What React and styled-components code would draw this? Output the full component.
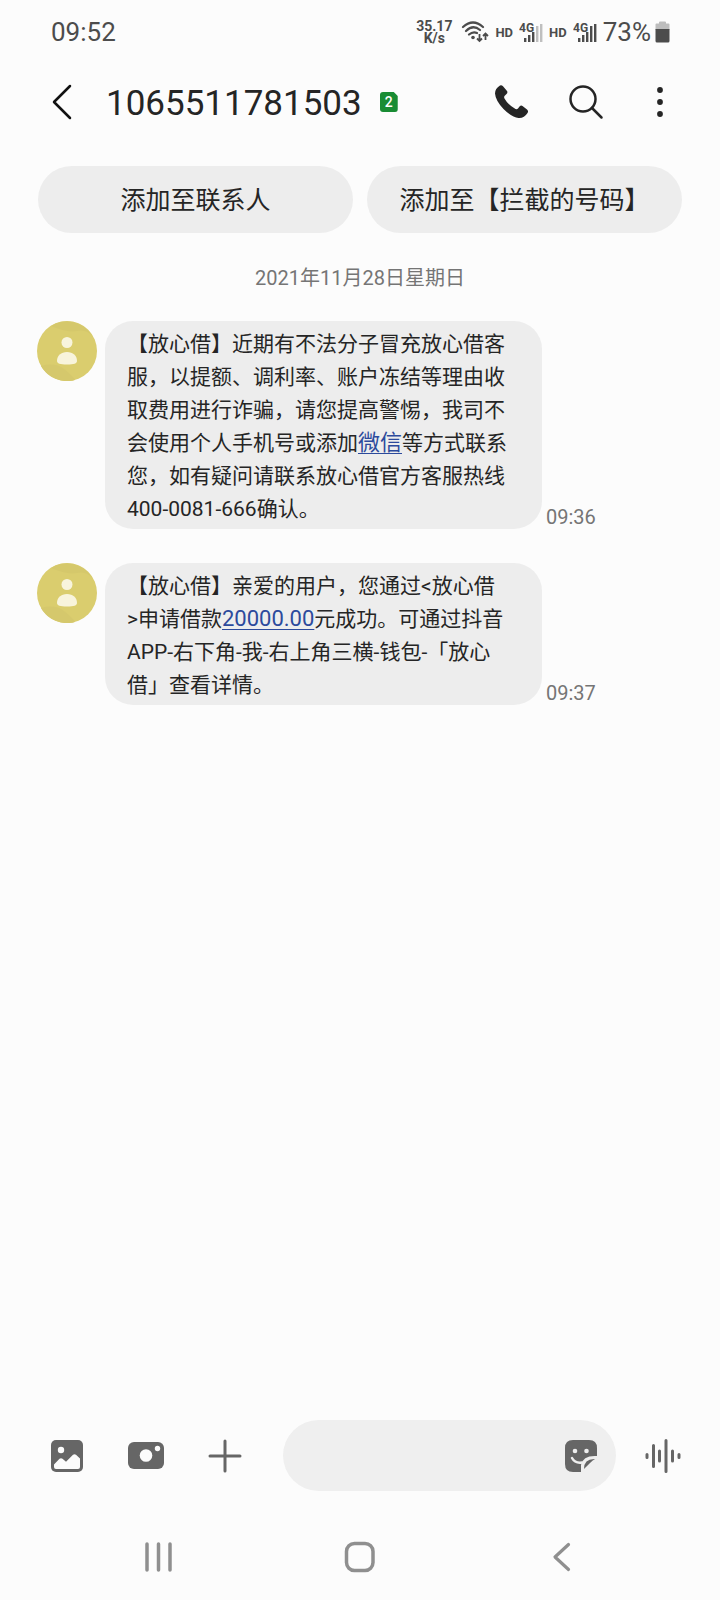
import React from 'react'
import styled, { createGlobalStyle } from 'styled-components'

const GlobalStyle = createGlobalStyle`
  * {
    box-sizing: border-box;
  }
  body {
    margin: 0;
    background-color: #fcfcfc;
    font-family: Roboto, 'Noto Sans CJK SC', sans-serif;
    color: #252525;
  }
  button {
    border: 0;
    padding: 0;
    background: none;
    font: inherit;
    color: inherit;
    cursor: pointer;
  }
  svg {
    display: block;
  }
`

const Screen = styled.div`
  display: flex;
  flex-direction: column;
  min-height: 100vh;
`

const StatusBar = styled.div`
  display: flex;
  align-items: center;
  justify-content: space-between;
  height: 64px;
  padding: 0 50px 0 51px;
  font-size: 26px;
  color: #4c4c4c;
`

const StatusGroup = styled.div`
  display: flex;
  align-items: center;
  gap: 6px;
`

const Speed = styled.div`
  margin-right: 3px;
  font-size: 14px;
  line-height: 12px;
  font-weight: 700;
  text-align: center;
`

const Hd = styled.span`
  font-size: 13px;
  font-weight: 700;
`

const Percent = styled.span`
  display: flex;
  align-items: center;
  gap: 4px;
`

const Header = styled.header`
  display: flex;
  align-items: center;
  height: 76px;
  padding: 0 41px 0 46px;
`

const Title = styled.h1`
  margin: 0 18px 0 28px;
  padding-top: 3px;
  font-size: 35px;
  font-weight: 400;
  line-height: 44px;
`

const SimBadge = styled.span`
  width: 18px;
  height: 20px;
  border-radius: 3px;
  background-color: #198c34;
  clip-path: polygon(0 0, 78% 0, 100% 20%, 100% 100%, 0 100%);
  color: #fff;
  font-size: 14px;
  font-weight: 500;
  line-height: 20px;
  text-align: center;
`

const HeaderActions = styled.div`
  display: flex;
  gap: 36px;
  margin-left: auto;
`

const IconButton = styled.button`
  display: flex;
  align-items: center;
  justify-content: center;
  width: ${props => props.$size || 38}px;
  height: 48px;
  flex-shrink: 0;
`

const QuickActions = styled.div`
  display: flex;
  gap: 14px;
  padding: 26px 38px 0;
`

const Pill = styled.button`
  flex: 1;
  height: 67px;
  border-radius: 34px;
  && {
    padding-bottom: 3px;
    background-color: #ededed;
    font-size: 25px;
  }
`

const Thread = styled.main`
  flex: 1;
  padding: 0 37px;
`

const DateLine = styled.div`
  margin: 33px 0 31px;
  text-align: center;
  font-size: 20px;
  line-height: 24px;
  color: #757575;
`

const Message = styled.article`
  display: flex;
  margin-bottom: 34px;
`

const Bubble = styled.p`
  flex: 0 1 437px;
  margin: 0 4px 0 8px;
  padding: 7px 30px 3px 22px;
  border-radius: 28px;
  background-color: #ededed;
  font-size: 21px;
  line-height: 33px;
`

const Link = styled.a`
  font-size: 22px;
  line-height: 1;
  color: #2c4a9c;
  text-decoration: underline;
  text-decoration-thickness: 1px;
  text-underline-offset: 3px;
`

const Time = styled.time`
  align-self: flex-end;
  font-size: 20px;
  line-height: 24px;
  color: #757575;
`

const Composer = styled.form`
  display: flex;
  align-items: center;
  gap: 28px;
  padding: 0 38px 0 48px;
`

const Attachments = styled.div`
  display: flex;
  gap: 41px;
  margin-right: 11px;
`

const InputBox = styled.label`
  display: flex;
  align-items: center;
  flex: 1;
  min-width: 0;
  height: 71px;
  padding: 0 16px 0 28px;
  border-radius: 36px;
  background-color: #efefef;
`

const Input = styled.input`
  flex: 1;
  min-width: 0;
  border: 0;
  outline: 0;
  background: none;
  font: inherit;
  font-size: 24px;
`

const NavBar = styled.nav`
  display: flex;
  justify-content: space-between;
  padding: 42px 139px 19px;
`

const Wifi = () => (
  <svg width="28" height="24" viewBox="0 0 28 24" fill="none" stroke="#4c4c4c" strokeWidth="2.200">
    <path d="M2 7Q12 -2 22 7M5 11Q12 4 19 10M8 14.500Q12 11 16 13" strokeLinecap="round" />
    <circle cx="12" cy="17.500" r="1.800" fill="#4c4c4c" stroke="none" />
    <path d="M18.500 14V21M16 18.500L18.500 21L21 18.500M24.500 20V13.500M22 16L24.500 13.500L27 16" strokeWidth="1.800" />
  </svg>
)

const Signal = ({ weak }) => (
  <svg width="24" height="22" viewBox="0 0 24 22" fill="#4c4c4c" role="img" aria-label="4G">
    <text x="0" y="11" fontSize="12" fontWeight="700" fontFamily="Roboto, sans-serif">4G</text>
    <rect x="5" y="17" width="2.400" height="4" />
    <rect x="9" y="14" width="2.400" height="7" />
    <rect x="13" y="11" width="2.400" height="10" />
    <rect x="17" y="5" width="2.400" height="16" opacity={weak ? 0.35 : 1} />
    <rect x="21" y="3" width="2.400" height="18" opacity={weak ? 0.35 : 1} />
  </svg>
)

const Battery = () => (
  <svg width="15" height="22" viewBox="0 0 15 22">
    <path d="M4 2.500V1.500Q4 .500 5 .500H10Q11 .500 11 1.500V2.500H13.500Q14.500 2.500 14.500 3.500V9H.500V3.500Q.500 2.500 1.500 2.500Z" fill="#bdbdbd" />
    <path d="M.500 8H14.500V20Q14.500 21.500 13 21.500H2Q.500 21.500 .500 20Z" fill="#4c4c4c" />
  </svg>
)

const AvatarIcon = styled.svg`
  flex-shrink: 0;
`

const Avatar = () => (
  <AvatarIcon width="60" height="60" viewBox="0 0 60 60">
    <circle cx="30" cy="30" r="30" fill="#dacd6e" />
    <path d="M14 5Q30 12 40 10T56 16A30 30 0 0 0 14 5Z" fill="#d5c86b" />
    <path d="M4 45Q18 41 27 48T38 59A30 30 0 0 1 4 45Z" fill="#d5c86c" />
    <circle cx="30" cy="21.500" r="5.500" fill="#f8f4dc" />
    <path d="M20 40C20 34.500 24 31 30 31S40 34.500 40 40C40 42.500 37 43.500 30 43.500S20 42.500 20 40Z" fill="#f8f4dc" />
  </AvatarIcon>
)

const messages = [
  {
    time: '09:36',
    body: (
      <>
        【放心借】近期有不法分子冒充放心借客服，以提额、调利率、账户冻结等理由收取费用进行诈骗，请您提高警惕，我司不会使用个人手机号或添加
        <Link href="#wechat">微信</Link>
        等方式联系您，如有疑问请联系放心借官方客服热线400-0081-666确认。
      </>
    )
  },
  {
    time: '09:37',
    body: (
      <>
        【放心借】亲爱的用户，您通过&lt;放心借
        <br />
        &gt;申请借款
        <Link href="#amount">20000.00</Link>
        元成功。可通过抖音
        <br />
        APP-右下角-我-右上角三横-钱包-「放心
        <br />
        借」查看详情。
      </>
    )
  }
]

export default function App() {
  return (
    <Screen>
      <GlobalStyle />
      <StatusBar>
        <span>09:52</span>
        <StatusGroup>
          <Speed>
            35.17
            <br />
            K/s
          </Speed>
          <Wifi />
          <Hd>HD</Hd>
          <Signal weak />
          <Hd>HD</Hd>
          <Signal />
          <Percent>
            73%
            <Battery />
          </Percent>
        </StatusGroup>
      </StatusBar>

      <Header>
        <IconButton $size={32} aria-label="返回">
          <svg width="32" height="36" viewBox="0 0 32 36" fill="none" stroke="#111" strokeWidth="2.500" strokeLinecap="round" strokeLinejoin="round">
            <path d="M24 2L8 18L24 34" />
          </svg>
        </IconButton>
        <Title>1065511781503</Title>
        <SimBadge>2</SimBadge>
        <HeaderActions>
          <IconButton aria-label="拨打电话">
            <svg width="36" height="36" viewBox="0 0 36 36" fill="#252525">
              <path d="M6 1.500Q7.500 .700 9 2.300L13 7Q14 8.500 12.500 10L10.500 12Q9.800 13 10.500 14.500Q14 21 21.500 25Q23 25.500 24 24.500L25.500 22.500Q27 21 28.500 22L33 25.500Q34.800 27 33.500 29Q30 34.500 24.500 34Q18 33.500 9.500 25Q1.500 16.500 1 9.500Q1 4.500 6 1.500Z" />
            </svg>
          </IconButton>
          <IconButton aria-label="搜索">
            <svg width="36" height="36" viewBox="0 0 36 36" fill="none" stroke="#252525" strokeWidth="2.500" strokeLinecap="round">
              <circle cx="15" cy="15" r="12.500" />
              <path d="M24 24L33.500 33.500" />
            </svg>
          </IconButton>
          <IconButton aria-label="更多">
            <svg width="8" height="32" viewBox="0 0 8 32" fill="#252525">
              <circle cx="4" cy="4" r="2.900" />
              <circle cx="4" cy="16" r="2.900" />
              <circle cx="4" cy="28" r="2.900" />
            </svg>
          </IconButton>
        </HeaderActions>
      </Header>

      <QuickActions>
        <Pill>添加至联系人</Pill>
        <Pill>添加至【拦截的号码】</Pill>
      </QuickActions>

      <Thread>
        <DateLine>2021年11月28日星期日</DateLine>
        {messages.map(({ time, body }) => (
          <Message key={time}>
            <Avatar />
            <Bubble>{body}</Bubble>
            <Time>{time}</Time>
          </Message>
        ))}
      </Thread>

      <Composer>
        <Attachments>
          <IconButton type="button" aria-label="图片">
            <svg width="34" height="34" viewBox="0 0 34 34" fill="#666">
              <rect x="1" y="1" width="32" height="32" rx="5" />
              <circle cx="11" cy="11" r="3.200" fill="#fcfcfc" />
              <path d="M4 25.500L9.500 19.800Q11 18.500 12.500 19.800L16 22.800L23 15.800Q24.500 14.500 26 15.800L30 19.500V28Q30 30 28 30H6Q4 30 4 28Z" fill="#fcfcfc" />
            </svg>
          </IconButton>
          <IconButton type="button" aria-label="拍照">
            <svg width="38" height="28" viewBox="0 0 38 28">
              <rect x="1" y="0" width="36" height="27" rx="6" fill="#666" />
              <circle cx="19" cy="13.500" r="6.300" fill="#fcfcfc" />
              <circle cx="30.500" cy="6.500" r="2.700" fill="#fcfcfc" />
            </svg>
          </IconButton>
          <IconButton type="button" aria-label="添加">
            <svg width="34" height="34" viewBox="0 0 34 34" stroke="#666" strokeWidth="3" strokeLinecap="round">
              <path d="M17 2V32M2 17H32" />
            </svg>
          </IconButton>
        </Attachments>
        <InputBox>
          <Input type="text" aria-label="输入信息" />
          <IconButton type="button" aria-label="表情贴纸">
            <svg width="34" height="34" viewBox="0 0 34 34">
              <path d="M9 1H25Q33 1 33 9V17Q19 16 17 26V33H9Q1 33 1 25V9Q1 1 9 1Z" fill="#666" />
              <path d="M20 30Q20 19.500 31 20Q29 21 26 24T20 30Z" fill="#666" />
              <circle cx="11" cy="12" r="2.300" fill="#efefef" />
              <circle cx="22.500" cy="12" r="2.300" fill="#efefef" />
              <path d="M8 19Q11 24.500 18 23.500" fill="none" stroke="#efefef" strokeWidth="2.500" strokeLinecap="round" />
            </svg>
          </IconButton>
        </InputBox>
        <IconButton type="button" aria-label="语音">
          <svg width="36" height="36" viewBox="0 0 36 36" stroke="#666" strokeWidth="3" strokeLinecap="round">
            <path d="M2 16.500V19.500M8.500 7.500V28.500M14.500 13V23M21 2.500V33.500M27.500 13V23M34 16.500V19.500" />
          </svg>
        </IconButton>
      </Composer>

      <NavBar>
        <IconButton aria-label="最近任务">
          <svg width="29" height="32" viewBox="0 0 29 32" stroke="#8f8f8f" strokeWidth="3.500" strokeLinecap="round">
            <path d="M3 3V29M14.500 3V29M26 3V29" />
          </svg>
        </IconButton>
        <IconButton aria-label="主屏幕">
          <svg width="32" height="32" viewBox="0 0 32 32" fill="none" stroke="#8f8f8f" strokeWidth="3.500">
            <rect x="2.500" y="2.500" width="26.500" height="27" rx="8" />
          </svg>
        </IconButton>
        <IconButton aria-label="后退">
          <svg width="32" height="32" viewBox="0 0 32 32" fill="none" stroke="#8f8f8f" strokeWidth="3.200" strokeLinecap="round" strokeLinejoin="round">
            <path d="M22.500 3.500L9 16L22.500 28.500" />
          </svg>
        </IconButton>
      </NavBar>
    </Screen>
  )
}
